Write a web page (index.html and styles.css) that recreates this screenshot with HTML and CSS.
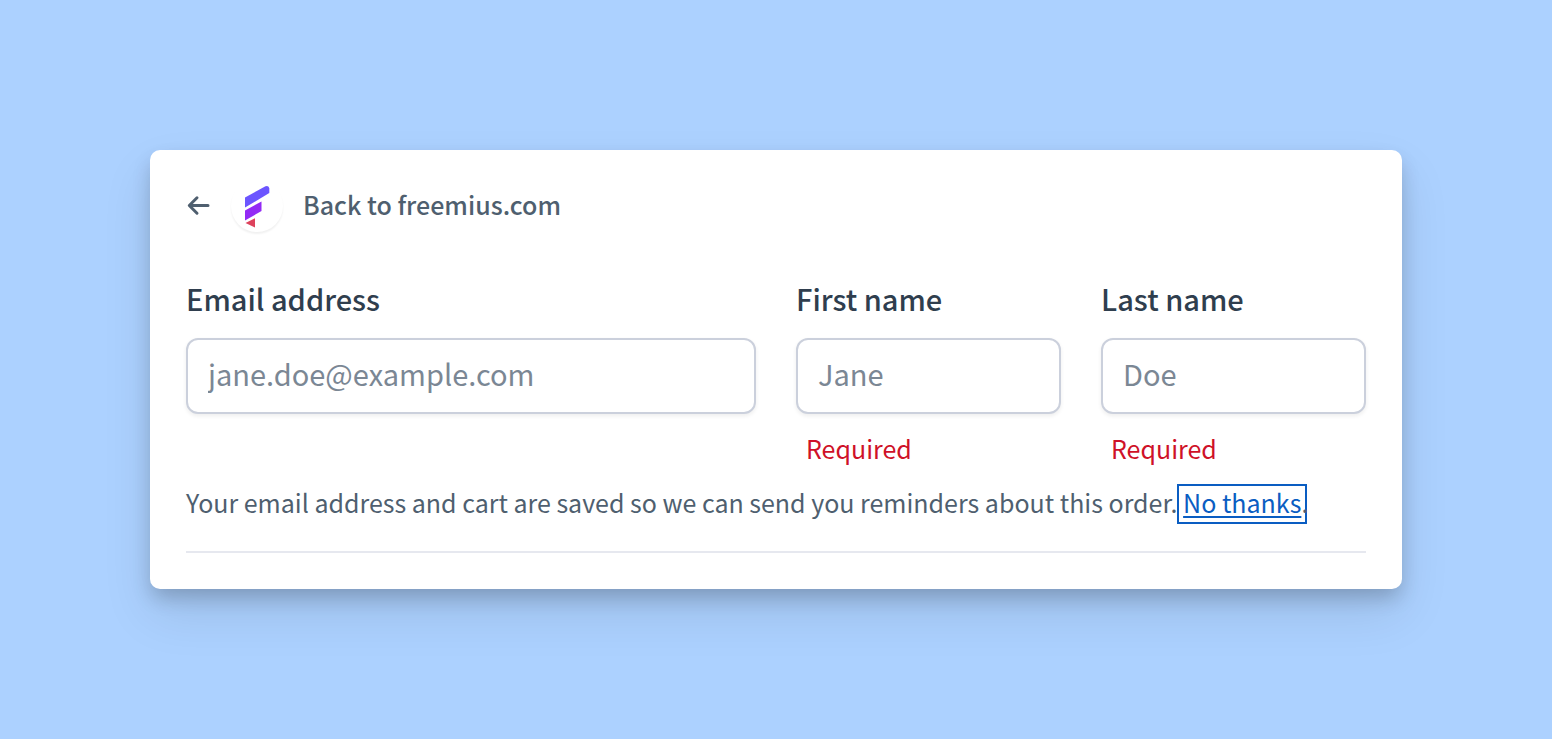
FILE: index.html
```
<!DOCTYPE html>
<html lang="en">

<head>
    <meta charset="UTF-8">
    <meta name="viewport" content="width=device-width, initial-scale=1.0">
    <title>Checkout</title>
    <link rel="stylesheet" href="styles.css">
</head>

<body>
    <main class="card">
        <a href="#" class="back-link">
            <svg class="back-arrow" viewBox="0 0 24 24" aria-hidden="true">
                <path d="M22 11.500H4M11 3.800L3.300 11.500l7.700 7.700" fill="none" stroke="currentColor" stroke-width="3" stroke-linecap="round" stroke-linejoin="round" />
            </svg>
            <span class="logo">
                <svg viewBox="0 0 52 52" aria-hidden="true">
                    <path d="M14 17.500L34.500 6.200Q38 5 38.300 8.500V13L14 27.500z" fill="#6c55ff" />
                    <path d="M14 30.500L30.500 21.500V31L14 40.500z" fill="#932af5" />
                    <path d="M14.500 43L24 38.300V47.500z" fill="#dd425c" />
                </svg>
            </span>
            <span class="back-text">Back to freemius.com</span>
        </a>

        <form class="fields">
            <div class="field field-email">
                <label for="email">Email address</label>
                <input type="email" id="email" name="email" placeholder="jane.doe@example.com">
            </div>
            <div class="field">
                <label for="first">First name</label>
                <input type="text" id="first" name="first" placeholder="Jane" aria-describedby="first-error">
                <p class="error" id="first-error">Required</p>
            </div>
            <div class="field">
                <label for="last">Last name</label>
                <input type="text" id="last" name="last" placeholder="Doe" aria-describedby="last-error">
                <p class="error" id="last-error">Required</p>
            </div>
        </form>

        <p class="note">Your email address and cart are saved so we can send you reminders about this order. <a href="#" class="opt-out">No thanks</a>.</p>
        <hr class="divider">
    </main>
</body>

</html>
```
FILE: styles.css
```
* {
    margin: 0;
    padding: 0;
    box-sizing: border-box;
}

body {
    font-family: 'Source Sans Pro', 'Noto Sans CJK SC', sans-serif;
    background: #acd1ff;
    min-height: 100vh;
    padding: 150px;
    color: #4f5f6f;
}

.card {
    background: white;
    border-radius: 10px;
    padding: 30px 36px 36px;
    box-shadow: 0 10px 20px -2px rgba(0, 0, 0, 0.2), 0 24px 50px rgba(0, 0, 0, 0.1);
}

.back-link {
    display: inline-flex;
    align-items: center;
    color: #4f5f6f;
    font-size: 25px;
    font-weight: 500;
    text-decoration: none;
}

.back-arrow {
    width: 24px;
    height: 24px;
    margin-right: 21px;
}

.logo {
    width: 52px;
    height: 52px;
    margin-right: 20px;
    border-radius: 50%;
    box-shadow: 0 2px 2px rgba(0, 0, 0, 0.06);
}

.back-text {
    padding-bottom: 4px;
}

.fields {
    display: grid;
    grid-template-columns: repeat(4, minmax(0, 1fr));
    column-gap: 40px;
    margin-top: 50px;
}

.field-email {
    grid-column: span 2;
}

.field label {
    display: block;
    margin-bottom: 24px;
    color: #2f3e4e;
    font-size: 29px;
    font-weight: 500;
    line-height: 32px;
}

.field input {
    display: block;
    width: 100%;
    height: 76px;
    padding: 0 20px 6px;
    border: 2px solid #cbd0dc;
    border-radius: 12px;
    background: white;
    box-shadow: 0 2px 4px rgba(0, 0, 0, 0.07);
    color: #2f3e4e;
    font-family: inherit;
    font-size: 29px;
}

.field input::placeholder {
    color: #7b8794;
}

.error {
    margin-top: 16px;
    padding-left: 10px;
    color: #cf1128;
    font-size: 25px;
    line-height: 36px;
}

.note {
    margin-top: 18px;
    font-size: 25px;
    line-height: 36px;
}

.opt-out {
    display: inline-block;
    padding-bottom: 4px;
    color: #0a5dc2;
    line-height: 24px;
    text-decoration: underline;
    text-decoration-thickness: 2px;
    text-underline-offset: 3px;
    outline: 2px solid #0a5dc2;
    outline-offset: 4px;
}

.divider {
    margin-top: 31px;
    border: none;
    border-top: 2px solid #e6e8ef;
}
```
